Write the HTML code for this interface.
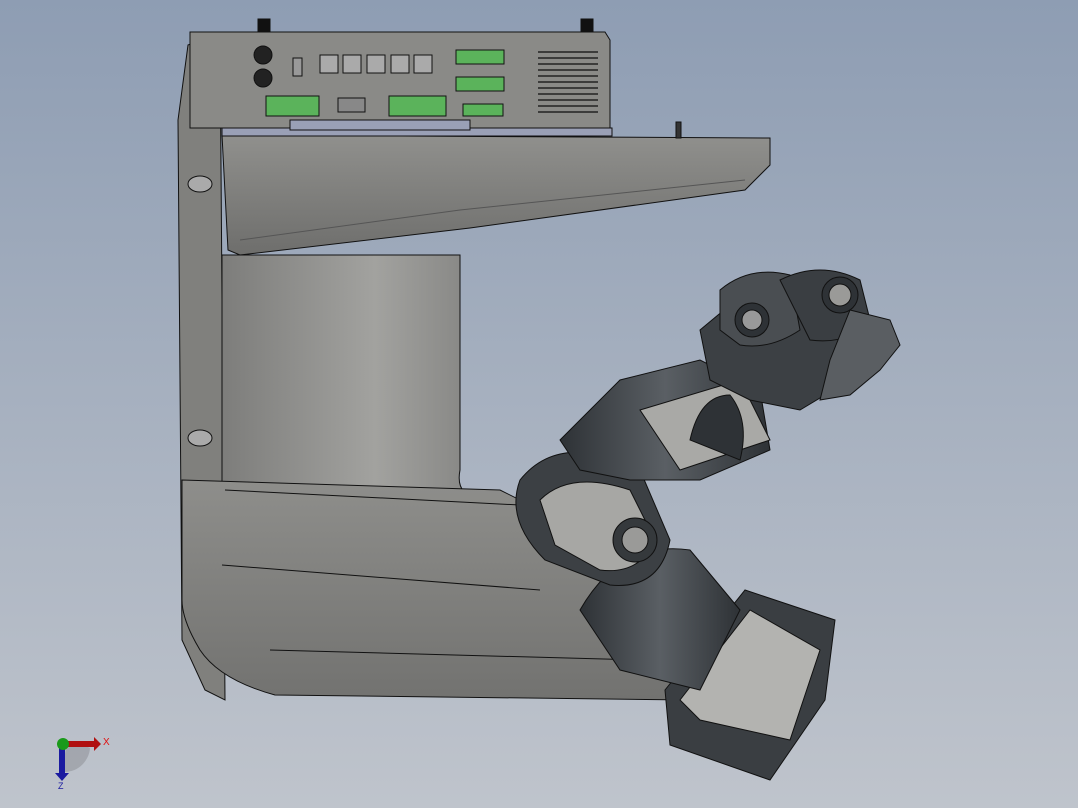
<!DOCTYPE html>
<html><head><style>
html,body{margin:0;padding:0;width:1078px;height:808px;overflow:hidden}
body{background:linear-gradient(#8e9db3,#bfc4cc);font-family:"Liberation Sans",sans-serif}
svg{position:absolute;left:0;top:0}
</style></head><body>
<svg width="1078" height="808" viewBox="0 0 1078 808">
<defs>
<linearGradient id="g1" x1="0" x2="1"><stop offset="0" stop-color="#7d7d7b"/><stop offset=".55" stop-color="#a2a29f"/><stop offset="1" stop-color="#7e7e7c"/></linearGradient>
<linearGradient id="g2" x1="0" x2="0" y1="0" y2="1"><stop offset="0" stop-color="#8e8e8b"/><stop offset="1" stop-color="#727270"/></linearGradient>
<linearGradient id="g3" x1="0" x2="0" y1="0" y2="1"><stop offset="0" stop-color="#90908d"/><stop offset="1" stop-color="#6e6e6c"/></linearGradient>
<linearGradient id="dk" x1="0" x2="1"><stop offset="0" stop-color="#2e3236"/><stop offset=".5" stop-color="#5a5f64"/><stop offset="1" stop-color="#2e3236"/></linearGradient>
</defs>
<g stroke="#111" stroke-width="1">
<path d="M188,45 L220,33 L225,700 L205,690 L182,640 L178,120 Z" fill="#80807d"/>
<path d="M222,255 L460,255 L460,470 Q455,495 480,500 L500,505 L222,500 Z" fill="url(#g1)"/>
<path d="M182,480 L500,490 L560,520 L640,610 L690,700 L275,695 Q220,680 200,650 Q182,620 182,600 Z" fill="url(#g2)"/>
<path d="M222,565 L540,590 M270,650 L640,660 M225,490 L520,505" fill="none"/>
<path d="M222,135 L770,138 L770,165 L745,190 L470,228 L240,255 L228,250 Z" fill="url(#g3)"/>
<path d="M240,240 L460,210 L745,180" fill="none" stroke="#555"/>
<path d="M190,32 L605,32 L610,40 L610,128 L190,128 Z" fill="#8a8a87"/>
<rect x="222" y="128" width="390" height="8" fill="#9aa0b6"/>
<rect x="290" y="120" width="180" height="10" fill="#9aa0b6"/>
<rect x="258" y="19" width="12" height="12" fill="#111"/>
<rect x="581" y="19" width="12" height="12" fill="#111"/>
<circle cx="263" cy="55" r="9" fill="#222"/><circle cx="263" cy="78" r="9" fill="#222"/>
<rect x="293" y="58" width="9" height="18" fill="#999"/>
<g fill="#aaa"><rect x="320" y="55" width="18" height="18"/><rect x="343" y="55" width="18" height="18"/><rect x="367" y="55" width="18" height="18"/><rect x="391" y="55" width="18" height="18"/><rect x="414" y="55" width="18" height="18"/></g>
<g fill="#5bb35b"><rect x="456" y="50" width="48" height="14"/><rect x="456" y="77" width="48" height="14"/><rect x="463" y="104" width="40" height="12"/><rect x="266" y="96" width="53" height="20"/><rect x="389" y="96" width="57" height="20"/></g>
<rect x="338" y="98" width="27" height="14" fill="#888"/>
<g fill="none" stroke="#222" stroke-width="1.5"><path d="M538,52h60M538,58h60M538,64h60M538,70h60M538,76h60M538,82h60M538,88h60M538,94h60M538,100h60M538,106h60M538,112h60"/></g>
<ellipse cx="200" cy="184" rx="12" ry="8" fill="#aaa"/><ellipse cx="200" cy="438" rx="12" ry="8" fill="#aaa"/>
<rect x="676" y="122" width="5" height="16" fill="#333"/>
</g>
<g stroke="#111" stroke-width="1">
<path d="M665,690 L745,590 L835,620 L825,700 L770,780 L670,745 Z" fill="#3a3e42"/>
<path d="M680,700 L750,610 L820,650 L790,740 L700,720 Z" fill="#b3b3b0"/>
<path d="M580,610 Q620,540 690,550 L740,610 L700,690 L620,670 Z" fill="url(#dk)"/>
<path d="M520,480 Q560,430 640,470 L670,540 Q660,590 610,585 L545,560 Q505,520 520,480 Z" fill="#3c4044"/>
<path d="M540,500 Q570,470 630,490 L655,540 Q640,575 600,570 L555,545 Z" fill="#a7a7a4"/>
<circle cx="635" cy="540" r="22" fill="#35393c"/><circle cx="635" cy="540" r="13" fill="#9a9a98"/>
<path d="M560,440 L620,380 L700,360 L760,390 L770,450 L700,480 L630,480 L580,470 Z" fill="url(#dk)"/>
<path d="M640,410 L740,380 L770,440 L680,470 Z" fill="#a9a9a6"/>
<path d="M690,440 Q700,395 730,395 Q750,420 740,460 Z" fill="#2e3236"/>
<path d="M700,330 L760,280 L830,300 L860,330 L850,380 L800,410 L750,400 L710,380 Z" fill="#3c4044"/>
<path d="M720,290 Q750,265 790,275 L800,330 Q770,350 740,345 L720,330 Z" fill="#4a4e52"/>
<circle cx="752" cy="320" r="17" fill="#2e3236"/><circle cx="752" cy="320" r="10" fill="#999"/>
<path d="M780,280 Q820,260 860,280 L870,320 Q850,345 810,340 Z" fill="#3a3e42"/>
<circle cx="840" cy="295" r="18" fill="#2e3236"/><circle cx="840" cy="295" r="11" fill="#9a9a98"/>
<path d="M850,310 L890,320 L900,345 L880,370 L850,395 L820,400 L830,360 Z" fill="#5a5e62"/>
</g>
<path d="M66,748 A26,26 0 0 1 90,748 A26,26 0 0 1 62,772 Z" fill="#8a8c92" opacity=".5"/>
<rect x="66" y="741" width="28" height="6" fill="#b01010"/><path d="M94,737 L101,744 L94,751 Z" fill="#b01010"/>
<rect x="59" y="745" width="6" height="28" fill="#1a1aa0"/><path d="M55,773 L62,781 L69,773 Z" fill="#1a1aa0"/>
<circle cx="63" cy="744" r="6" fill="#1a9a1a"/>
<text x="103" y="745" font-size="10" fill="#e01010">X</text>
<text x="58" y="789" font-size="9" fill="#1a1aa0">Z</text>
</svg>
</body></html>
